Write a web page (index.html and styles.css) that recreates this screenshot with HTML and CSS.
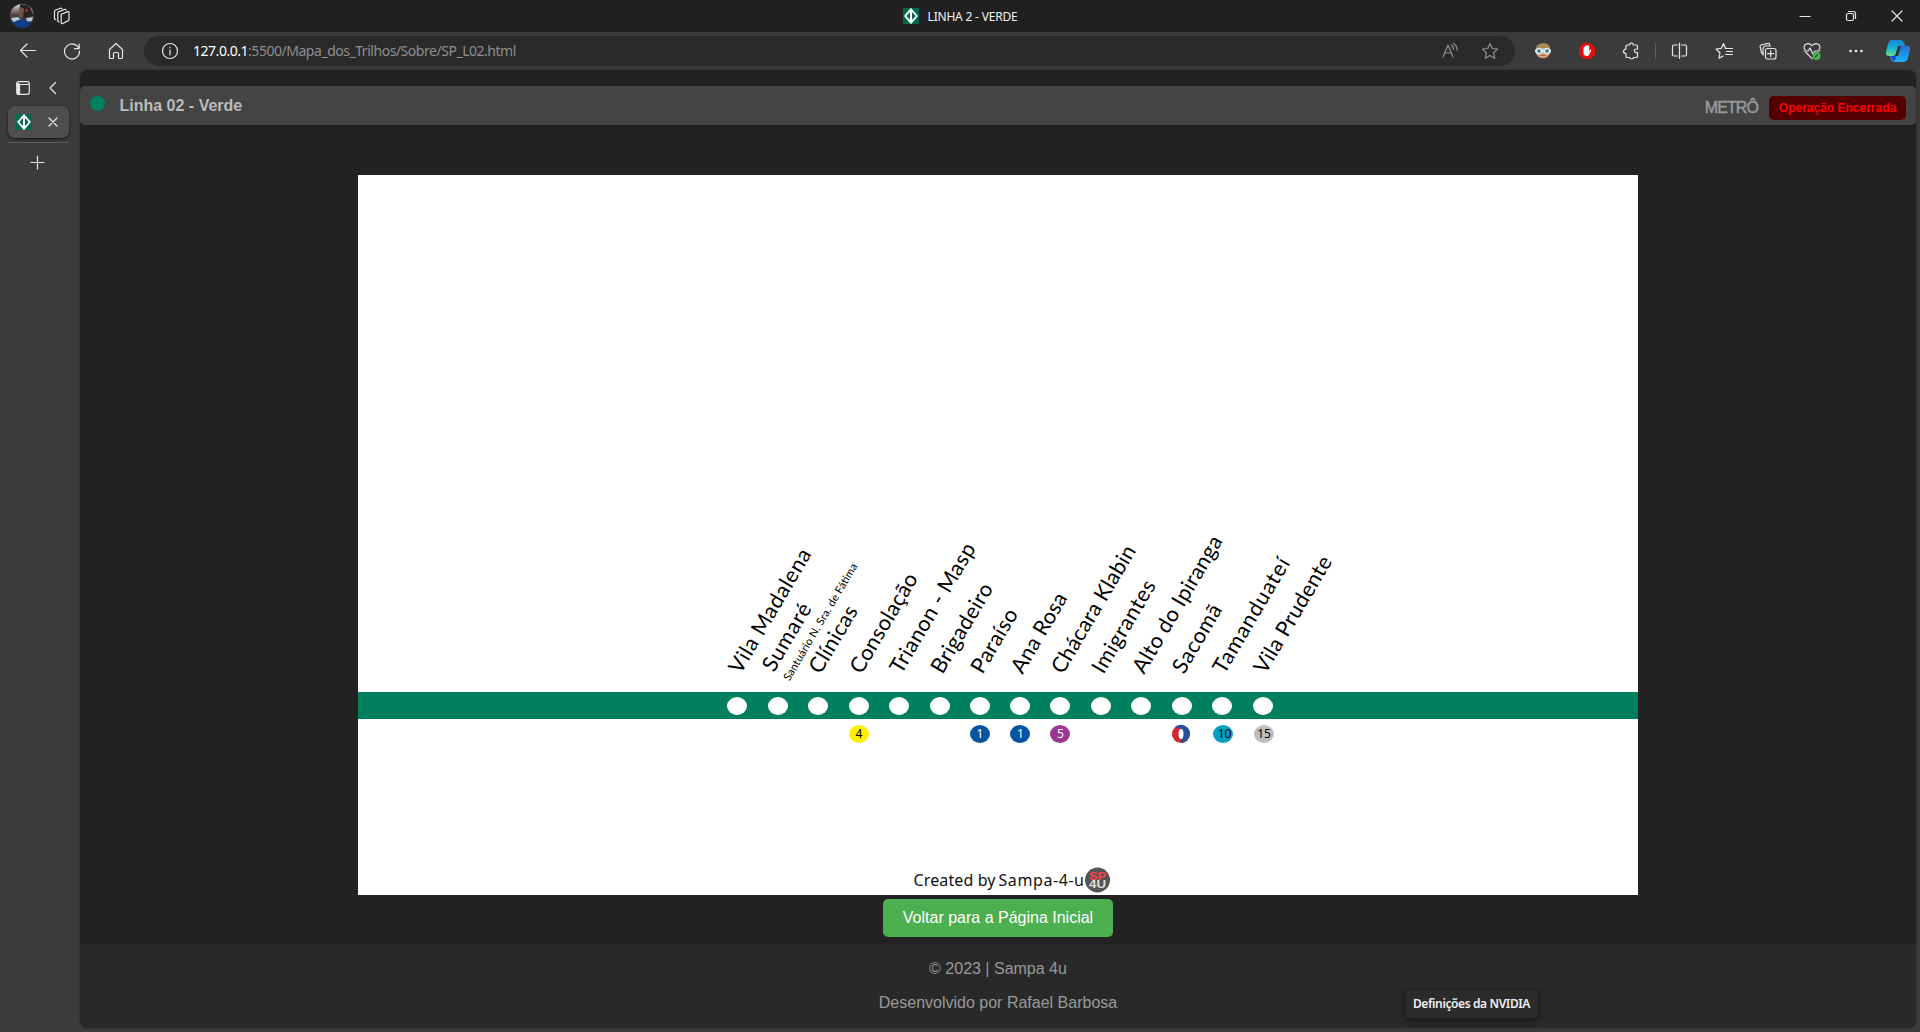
FILE: index.html
```html
<!DOCTYPE html>
<html lang="pt-BR">
<head>
<meta charset="utf-8">
<title>LINHA 2 - VERDE</title>
<link rel="stylesheet" href="styles.css">
</head>
<body>
<svg width="0" height="0" class="defs">
  <defs>
    <symbol id="metro" viewBox="0 0 16 16"><rect width="16" height="16" fill="#00694d"/><path d="M8 1.300 13.800 8 8 14.700 2.200 8z" fill="none" stroke="#fff" stroke-width="1.900"/><path d="M8 1v14" stroke="#fff" stroke-width="2"/></symbol>
    <linearGradient id="face" x1="0" y1="0" x2="0" y2="1"><stop offset="0" stop-color="#d8d8d2"/><stop offset=".45" stop-color="#50443f"/><stop offset="1" stop-color="#102a66"/></linearGradient>
    <linearGradient id="cop1" x1="0" y1="0" x2="0" y2="1"><stop offset="0" stop-color="#1683d8"/><stop offset=".5" stop-color="#17b2cf"/><stop offset="1" stop-color="#69df8b"/></linearGradient>
    <linearGradient id="cop2" x1="0" y1="0" x2="0" y2="1"><stop offset="0" stop-color="#2a67d6"/><stop offset="1" stop-color="#19b5f5"/></linearGradient>
  </defs>
</svg>
<div class="window">
  <header class="titlebar">
    <div class="title-left">
      <svg class="avatar" width="24" height="24" viewBox="0 0 24 24"><circle cx="12" cy="12" r="12" fill="url(#face)"/><path d="M10 .5q6-1 10 3l3.500 8-8 3-6-4z" fill="#282123"/><path d="M1 14l7-1 3 3-5 3q-4-1-5-5zM16 14l7-1-1 4-5 1z" fill="#b5c5d2"/><path d="M9 4q3-2 5 1l-1 8h-4z" fill="#755448"/><circle cx="16.700" cy="6.500" r="1.300" fill="#e3243d"/><path d="M3 19q8-7 18 0-3 4.500-9 5-6-.5-9-5z" fill="#153d86"/></svg>
      <svg width="18" height="18" viewBox="0 0 18 18" class="line"><path d="m8.200 7.200 6.600-2.600q1.200-.3 1.200.9v6.900q0 .8-.7 1.200l-5.600 2.900q-1.500.6-1.500-.9zM4.800 14.300V6q0-.8.800-1.100l6.300-2.600 1.200.7M4.800 14.300l1.300.7M1.500 11.900V4.600q0-1 .8-1.300L7.700 1l1.200.7M1.500 11.900l1.200.7"/></svg>
    </div>
    <div class="title-center"><svg width="16" height="16"><use href="#metro"/></svg><span class="window-title">LINHA 2 - VERDE</span></div>
    <div class="controls">
      <svg width="12" height="12" class="line"><path d="M1 6.500h10"/></svg>
      <svg width="12" height="12" class="line"><rect x="1.500" y="3.500" width="7" height="7" rx="1.500"/><path d="M3.500 1.500h5q2 0 2 2v5"/></svg>
      <svg width="12" height="12" class="line"><path d="m1 1 10 10M11 1 1 11"/></svg>
    </div>
  </header>

  <nav class="toolbar">
    <div class="nav-buttons">
      <svg width="18" height="18" class="line"><path d="M16.500 8.500H2M8 2 1.500 8.500 8 15"/></svg>
      <svg width="18" height="18" class="line"><path d="M15.900 6.500A7.500 7.500 0 1 0 16.500 9M16.200 2v4.700h-4.700"/></svg>
      <svg width="18" height="18" class="line"><path d="M2.500 7.500 9 1.500l6.500 6v8q0 1-1 1h-2.300q-.7 0-.7-.8v-4.200q0-1-1-1h-3q-1 0-1 1v4.200q0 .8-.7.800H3.500q-1 0-1-1z"/></svg>
    </div>
    <div class="address">
      <svg width="18" height="18" class="line"><circle cx="9" cy="9" r="7.500"/><path d="M9 8v5M9 5.200v.6"/></svg>
      <span class="url"><b>127.0.0.1</b>:5500/Mapa_dos_Trilhos/Sobre/SP_L02.html</span>
      <svg width="18" height="18" class="line dim"><path d="m2 15 5-12 5 12M4 11h6M10.500 3q2 1.500 2 4.500M12.500 1.500q3.500 2 3.500 6.500"/></svg>
      <svg width="18" height="18" class="line dim"><path d="m9 1.500 2.300 5 5.200.6-3.900 3.700 1.100 5.500L9 13.500l-4.700 2.800 1.100-5.500-3.900-3.700 5.200-.6z"/></svg>
    </div>
    <div class="extensions">
      <svg width="18" height="18" viewBox="0 0 18 18"><circle cx="9" cy="9" r="7.300" fill="#dba27e"/><path d="M2 7Q2 1.500 9 1.200T16 7q-7-2-14 0z" fill="#a88957"/><path d="M1 7.500h16v3H1z" fill="#d6eaf0"/><circle cx="5" cy="9" r="3.200" fill="#d6eaf0"/><circle cx="13" cy="9" r="3.200" fill="#d6eaf0"/><circle cx="5" cy="9" r="1.700" fill="#38717f"/><circle cx="13" cy="9" r="1.700" fill="#38717f"/><path d="M6.500 13.500h5" stroke="#a65a45"/></svg>
      <svg width="18" height="18" viewBox="0 0 18 18"><path d="M5.700 1h6.600L17 5.700v6.600L12.300 17H5.700L1 12.300V5.700z" fill="#e60d0d"/><path d="M5.500 9V5.500q.7-.8 1.300 0V4q.8-.8 1.400 0v-.7q.8-.8 1.500 0V4q.8-.8 1.500 0v5l1.200-1.400q.9-.4 1 .5l-2.100 4.400q-.7 1.500-2.300 1.500-3.500 0-3.500-3z" fill="#fff"/></svg>
      <svg width="18" height="18" class="line"><path d="M5 3h2.500q0-1.800 1.900-1.800T11.300 3h3.200q1 0 1 1v3h-1.300q-1.800 0-1.800 1.800t1.800 1.900h1.300v3.800q0 1-1 1h-3q0 1.500-1.900 1.500t-2-1.500H5q-1 0-1-1v-3q-2.500 0-2.500-2T4 6.800V4q0-1 1-1z"/></svg>
    </div>
    <i class="divider"></i>
    <div class="tools">
      <svg width="18" height="18" class="line"><path d="M6.500 3H3Q1.500 3 1.500 4.500v8Q1.500 14 3 14h3.500M10.500 3H14q1.500 0 1.500 1.500v8q0 1.500-1.500 1.500h-3.500M8.500 1v15.500"/></svg>
      <svg width="18" height="18" class="line"><path d="M11.500 6.500 10.300 6 8.500 1.500 6.300 6.300 1 7l3.900 3.700L4 16.300l4-2.200M10.500 6.500h7M11.500 9.500h6M10.500 12.500h7"/></svg>
      <svg width="18" height="18" class="line"><path d="M4 12 2.500 11 1.100 4.300q-.2-1 .8-1.300l7.300-1.700q1-.2 1.300.8l.2 1.200"/><rect x="6.500" y="6.500" width="10.500" height="10.500" rx="2"/><path d="M11.700 8.700v6M8.700 11.700h6M4 13V7q0-2.500 2.500-3h5"/></svg>
      <svg width="18" height="18" class="line"><path d="M2 7.500Q0 5 2.200 2.700 5.500 0 9 3.600q3.500-3.600 6.800-.9Q18 5 16 7.500M3 10.500l6 6.200M1 9h4l2-3 3 6 2-3h5"/><circle cx="13.500" cy="14" r="4" fill="#4caf50" stroke="none"/><path d="m12.200 15.200 2.500-2.500" stroke="#205524"/></svg>
      <svg width="18" height="18"><g fill="#eee"><circle cx="3.500" cy="9" r="1.300"/><circle cx="9" cy="9" r="1.300"/><circle cx="14.500" cy="9" r="1.300"/></g></svg>
    </div>
    <svg class="copilot" width="24" height="24" viewBox="0 0 24 24"><path d="M6 1h9q2 0 3 3l1 3h-4q-2 0-3 3l-2 5q-1 2-3 2H3q-4 0-3-4L2 5q1-4 4-4z" fill="url(#cop1)"/><path d="M18 7h3q4 0 3 4l-2 8q-1 4-5 4H9q-3 0-4-3l-1-3h4q2 0 3-2l3-8q1-2 4 0z" fill="url(#cop2)"/><path d="M12 7h3l-3 10H9z" fill="#303638"/><path d="M5 17h5l-1 5q-3 0-4-5z" fill="#1747ce"/></svg>
  </nav>

  <div class="workspace">
    <aside class="tabs">
      <div class="tab-tools">
        <svg width="14" height="14" class="line"><rect x=".7" y=".7" width="12.600" height="12.600" rx="2"/><path d="M1 3.500h12M3.500 3.500V13" /><path d="M2.200 3v10" stroke-width="2.500"/></svg>
        <svg width="8" height="14" class="line"><path d="M6.500 1.500 1 7l5.500 5.500"/></svg>
      </div>
      <div class="tab"><svg width="16" height="16"><use href="#metro"/></svg><svg width="10" height="10" class="line"><path d="m1 1 8 8M9 1 1 9"/></svg></div>
      <svg class="new-tab line" width="16" height="16"><path d="M1 8.500h13M7.500 2v13"/></svg>
    </aside>

    <main class="page">
      <div class="line-header">
        <i class="line-dot"></i><h1>Linha 02 - Verde</h1>
        <span class="operator">METRÔ</span><span class="status">Operação Encerrada</span>
      </div>
      <svg class="map" width="1280" height="720" viewBox="358 175 1280 720">
        <rect x="358" y="175" width="1280" height="720" fill="#fff"/>
        <rect x="358" y="692" width="1280" height="27" fill="#00805e"/>
        <g fill="#fff">
          <ellipse cx="737" cy="706" rx="10" ry="9"/><ellipse cx="778" cy="706" rx="10" ry="9"/><ellipse cx="818" cy="706" rx="10" ry="9"/><ellipse cx="859" cy="706" rx="10" ry="9"/><ellipse cx="899" cy="706" rx="10" ry="9"/><ellipse cx="940" cy="706" rx="10" ry="9"/><ellipse cx="980" cy="706" rx="10" ry="9"/><ellipse cx="1020" cy="706" rx="10" ry="9"/><ellipse cx="1060" cy="706" rx="10" ry="9"/><ellipse cx="1101" cy="706" rx="10" ry="9"/><ellipse cx="1141" cy="706" rx="10" ry="9"/><ellipse cx="1182" cy="706" rx="10" ry="9"/><ellipse cx="1222" cy="706" rx="10" ry="9"/><ellipse cx="1263" cy="706" rx="10" ry="9"/>
        </g>
        <g class="stations">
          <text transform="translate(740.500 675) rotate(-59.400)" textLength="140.500">Vila Madalena</text>
          <text transform="translate(774 673) rotate(-59.400)" textLength="75">Sumaré</text>
          <text class="subtitle" transform="translate(789.500 681.500) rotate(-59.400)" textLength="134">Santuário N. Sra. de Fátima</text>
          <text transform="translate(820.500 675) rotate(-59.400)" textLength="74.500">Clínicas</text>
          <text transform="translate(861.500 675) rotate(-59.400)" textLength="112">Consolação</text>
          <text transform="translate(901.500 675) rotate(-59.400)" textLength="147">Trianon - Masp</text>
          <text transform="translate(942.500 675) rotate(-59.400)" textLength="100.500">Brigadeiro</text>
          <text transform="translate(982.500 675) rotate(-59.400)" textLength="71">Paraíso</text>
          <text transform="translate(1022.500 675) rotate(-59.400)" textLength="89.500">Ana Rosa</text>
          <text transform="translate(1063 675) rotate(-59.400)" textLength="144.500">Chácara Klabin</text>
          <text transform="translate(1103.500 675) rotate(-59.400)" textLength="104">Imigrantes</text>
          <text transform="translate(1144 675) rotate(-59.400)" textLength="155.500">Alto do Ipiranga</text>
          <text transform="translate(1184 675) rotate(-59.400)" textLength="76">Sacomã</text>
          <text transform="translate(1224.500 675) rotate(-59.400)" textLength="130">Tamanduateí</text>
          <text transform="translate(1265.500 675) rotate(-59.400)" textLength="132">Vila Prudente</text>
        </g>
        <g class="transfers">
          <ellipse cx="859" cy="734" rx="10" ry="9" fill="#fff000"/><text x="859" y="737.500">4</text>
          <ellipse cx="980" cy="734" rx="10" ry="9" fill="#0455a1"/><text x="980" y="738" fill="#fff">1</text>
          <ellipse cx="1020" cy="734" rx="10" ry="9" fill="#0455a1"/><text x="1020.500" y="738" fill="#fff">1</text>
          <ellipse cx="1060" cy="734" rx="10" ry="9" fill="#9b3894"/><text x="1060.500" y="737.500" fill="#fff">5</text>
          <ellipse cx="1181" cy="734" rx="9" ry="9" fill="#d1282f"/><path d="M1174.500 727.500a9 9 0 1 1 7 15.300l-1-3.800q4-3 2-9-3-3-8-2.500z" fill="#254f99"/><ellipse cx="1181" cy="734" rx="2.500" ry="5" fill="#fff"/>
          <ellipse cx="1223" cy="734" rx="10" ry="9" fill="#049fc3"/><text x="1224.500" y="738">10</text>
          <ellipse cx="1264" cy="734" rx="10" ry="9" fill="#bebebe"/><text x="1264" y="738">15</text>
        </g>
        <g class="credit"><text x="913.500" y="886" textLength="82">Created by</text><text x="998.500" y="886" textLength="85.500">Sampa-4-u</text></g>
        <circle cx="1097.500" cy="880" r="12.500" fill="#555"/>
        <g class="badge-text"><text x="1097.500" y="879.500" fill="#ff4248" textLength="17" lengthAdjust="spacingAndGlyphs">SP</text><text x="1097.500" y="888" fill="#ddd" textLength="17" lengthAdjust="spacingAndGlyphs">4U</text></g>
      </svg>
      <a class="home-link">Voltar para a Página Inicial</a>
      <footer><p>© 2023 | Sampa 4u</p><p>Desenvolvido por Rafael Barbosa</p></footer>
    </main>
  </div>
  <div class="tooltip">Definições da NVIDIA</div>
</div>
</body>
</html>
```
FILE: styles.css
```css
* { box-sizing: border-box; }
body { margin: 0; background: #3b3b3b; font-family: "Liberation Sans", Arial, sans-serif; overflow: hidden; }
svg { display: block; flex: none; }
.defs { position: absolute; }
.line { fill: none; stroke: #e6e6e6; stroke-width: 1.2; stroke-linecap: round; stroke-linejoin: round; }
.dim { stroke: #909090; }
.window { width: 1920px; height: 1032px; display: flex; flex-direction: column; position: relative; }

.titlebar { height: 32px; background: #202020; display: grid; grid-template-columns: 1fr auto 1fr; align-items: center; }
.title-left { display: flex; align-items: center; gap: 19px; padding-left: 10px; }
.title-center { display: flex; align-items: center; gap: 9px; }
.window-title { font: 12px/16px "Noto Sans", sans-serif; color: #f2f2f2; white-space: nowrap; letter-spacing: -.2px; padding-top: 1px; }
.controls { display: flex; justify-content: flex-end; gap: 34px; padding-right: 17px; }

.toolbar { height: 38px; display: flex; align-items: center; padding-left: 19px; }
.nav-buttons { width: 125px; display: flex; gap: 26px; }
.address { width: 1371px; height: 30px; border-radius: 15px; background: #2a2a2a; display: flex; align-items: center; padding: 0 16px 0 17px; gap: 22px; }
.url { flex: 1; margin-left: -8px; font: 14px/20px "Noto Sans", sans-serif; letter-spacing: -.47px; color: #8f8f8f; white-space: nowrap; }
.url b { font-weight: 400; color: #fff; }
.extensions, .tools { display: flex; gap: 26px; }
.extensions { margin-left: 19px; }
.divider { width: 1px; height: 16px; background: #606060; margin: 0 15px; }
.copilot { margin-left: 21px; }

.workspace { flex: 1; display: flex; padding: 0 4px 4px 0; min-height: 0; }
.tabs { width: 80px; padding: 11px 11px 0 8px; }
.tab-tools { display: flex; align-items: center; gap: 19px; padding-left: 8px; }
.tab { height: 32px; margin-top: 11px; padding: 0 11px 0 8px; border-radius: 7px; background: #4e4e4e; box-shadow: 0 1px 3px #171717; display: flex; align-items: center; justify-content: space-between; }
.new-tab { margin-top: 16px; margin-left: 22px; overflow: visible; }
.tab::after { content: ""; position: absolute; left: 8px; top: 142px; width: 61px; height: 1px; background: #606060; }

.page { flex: 1; background: #222; border-radius: 8px; overflow: hidden; padding-top: 16px; display: flex; flex-direction: column; align-items: center; box-shadow: 0 0 2px #252525; }
.line-header { align-self: stretch; height: 39px; background: #444; border-radius: 5px; display: flex; align-items: center; padding: 0 10px; }
.line-dot { width: 15px; height: 15px; border-radius: 50%; background: #00805e; margin-top: -4px; }
h1 { margin: 0 0 0 14.500px; font-size: 16px; line-height: 18px; color: #bbb; }
.operator { margin-left: auto; font-size: 16px; letter-spacing: -.9px; -webkit-text-stroke: .5px #999; color: #999; padding-top: 4px; }
.status { margin: 4px 0 0 11px; width: 137px; height: 24px; border-radius: 5px; background: #500; color: #f00; font-size: 12px; line-height: 24px; font-weight: 700; text-align: center; white-space: nowrap; }
.map { margin-top: 50px; }
.stations { font: 21.5px Lato, sans-serif; fill: #000; }
.stations .subtitle { font-size: 11px; }
.transfers { font: 12px "Noto Sans", sans-serif; text-anchor: middle; }
.credit { font: 16px "Noto Sans", sans-serif; fill: #111; }
.badge-text { font: 900 11px "Liberation Sans", sans-serif; text-anchor: middle; }
.home-link { margin-top: 4px; padding: 10px 20px; border-radius: 5px; background: #4caf50; color: #fff; font-size: 16px; line-height: 18px; }
footer { align-self: stretch; flex: 1; margin-top: 7px; padding-top: 16px; background: #292929; color: #999; text-align: center; font-size: 16px; line-height: 18px; }
footer p { margin: 0 0 16px; }
.tooltip { position: absolute; left: 1404px; top: 989px; width: 135px; height: 30px; border-radius: 4px; background: #2b2b2b; border: 1px solid #202020; box-shadow: 0 2px 5px #1b1b1b; color: #f2f2f2; font: 600 12px/28px "Noto Sans", sans-serif; letter-spacing: -.38px; text-align: center; white-space: nowrap; }
```
